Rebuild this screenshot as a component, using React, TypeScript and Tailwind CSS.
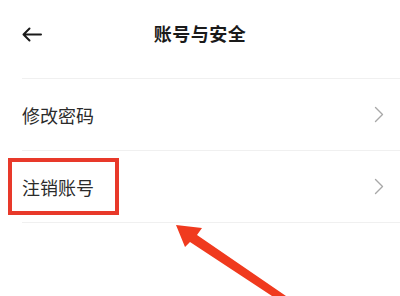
const FONT = { fontFamily: '"Noto Sans CJK SC", "Noto Sans", sans-serif' };

function Chevron() {
  return (
    <svg width="10" height="17" viewBox="0 0 10 17" fill="none">
      <path d="M1.5 1.5L8.5 8.5L1.5 15.5" stroke="#a8a8a8" strokeWidth="1.4" strokeLinecap="round" strokeLinejoin="round" />
    </svg>
  );
}

function Row({ label, marked }: { label: string; marked?: boolean }) {
  return (
    <div className="relative ml-[22px] border-b border-[#f0f0f0]">
      <div className="flex items-center h-[71px] pr-[16px]">
        <span className="flex-1 text-[18px] text-[#2b2b2b] leading-none">{label}</span>
        <Chevron />
      </div>
      {marked && (
        <div className="absolute -left-[14px] top-[7px] w-[111px] h-[57px] border-[4px] border-[#e8392a]" />
      )}
    </div>
  );
}

export default function App() {
  return (
    <div className="relative w-[400px] h-[296px] bg-white overflow-hidden" style={FONT}>
      <div className="relative flex items-center justify-center h-[66px]">
        <svg className="absolute left-[21px] top-[27px]" width="22" height="15" viewBox="0 0 22 15" fill="none">
          <path d="M20 7.5H2.5M8.5 1.5L2.5 7.5L8.5 13.5" stroke="#1a1a1a" strokeWidth="2" strokeLinecap="round" strokeLinejoin="round" />
        </svg>
        <h1 className="text-[18px] font-bold text-[#1a1a1a] tracking-[0.5px]">账号与安全</h1>
      </div>
      <div className="mt-3 ml-[22px] border-t border-[#f0f0f0]" />
      <Row label="修改密码" />
      <Row label="注销账号" marked />
      <svg className="absolute left-0 top-0 pointer-events-none" width="400" height="296" viewBox="0 0 400 296">
        <polygon points="176,225 202,228 197,235 286,296 272,296 190,242 185,247" fill="#f03a1e" />
      </svg>
    </div>
  );
}
